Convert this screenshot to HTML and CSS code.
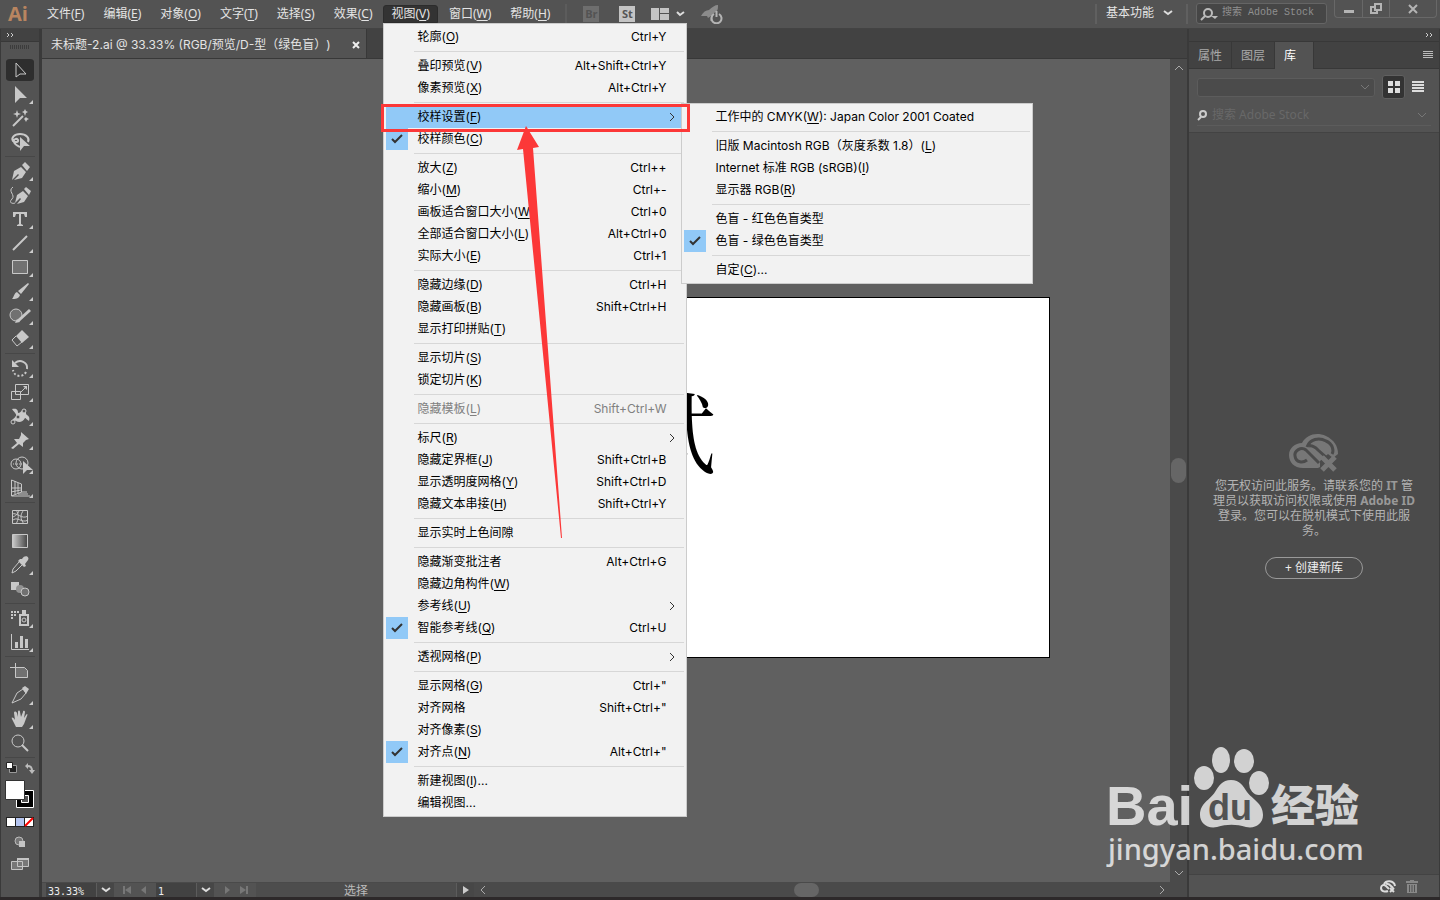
FILE: index.html
```html
<!DOCTYPE html>
<html lang="zh-CN">
<head>
    <meta charset="UTF-8">
    <meta name="viewport" content="width=device-width, initial-scale=1.0">
    <title>未标题-2.ai</title>
    <link rel="stylesheet" href="styles.css">
</head>
<body>
    <!-- Barra de menus -->
    <header class="menubar">
        <span class="logo">Ai</span>
        <nav class="menus">
            <button class="menu-btn">文件(<u>F</u>)</button>
            <button class="menu-btn">编辑(<u>E</u>)</button>
            <button class="menu-btn">对象(<u>O</u>)</button>
            <button class="menu-btn">文字(<u>T</u>)</button>
            <button class="menu-btn">选择(<u>S</u>)</button>
            <button class="menu-btn">效果(<u>C</u>)</button>
            <div class="menu-open">
                <button class="menu-btn active">视图(<u>V</u>)</button>

                <div class="menu view-menu">
                    <button class="item"><span>轮廓(<u>O</u>)</span><kbd>Ctrl+Y</kbd></button>
                    <hr>
                    <button class="item"><span>叠印预览(<u>V</u>)</span><kbd>Alt+Shift+Ctrl+Y</kbd></button>
                    <button class="item"><span>像素预览(<u>X</u>)</span><kbd>Alt+Ctrl+Y</kbd></button>
                    <hr>
                    <button class="item selected"><span>校样设置(<u>F</u>)</span><svg class="more" viewBox="0 0 6 10"><path d="M1 1l4 4-4 4"/></svg></button>
                    <button class="item checked"><svg class="check" viewBox="0 0 22 22"><path d="M6 11l3 3 7-7"/></svg><span>校样颜色(<u>C</u>)</span></button>
                    <hr>
                    <button class="item"><span>放大(<u>Z</u>)</span><kbd>Ctrl++</kbd></button>
                    <button class="item"><span>缩小(<u>M</u>)</span><kbd>Ctrl+-</kbd></button>
                    <button class="item"><span>画板适合窗口大小(<u>W</u>)</span><kbd>Ctrl+0</kbd></button>
                    <button class="item"><span>全部适合窗口大小(<u>L</u>)</span><kbd>Alt+Ctrl+0</kbd></button>
                    <button class="item"><span>实际大小(<u>E</u>)</span><kbd>Ctrl+1</kbd></button>
                    <hr>
                    <button class="item"><span>隐藏边缘(<u>D</u>)</span><kbd>Ctrl+H</kbd></button>
                    <button class="item"><span>隐藏画板(<u>B</u>)</span><kbd>Shift+Ctrl+H</kbd></button>
                    <button class="item"><span>显示打印拼贴(<u>T</u>)</span></button>
                    <hr>
                    <button class="item"><span>显示切片(<u>S</u>)</span></button>
                    <button class="item"><span>锁定切片(<u>K</u>)</span></button>
                    <hr>
                    <button class="item" disabled><span>隐藏模板(<u>L</u>)</span><kbd>Shift+Ctrl+W</kbd></button>
                    <hr>
                    <button class="item"><span>标尺(<u>R</u>)</span><svg class="more" viewBox="0 0 6 10"><path d="M1 1l4 4-4 4"/></svg></button>
                    <button class="item"><span>隐藏定界框(<u>J</u>)</span><kbd>Shift+Ctrl+B</kbd></button>
                    <button class="item"><span>显示透明度网格(<u>Y</u>)</span><kbd>Shift+Ctrl+D</kbd></button>
                    <button class="item"><span>隐藏文本串接(<u>H</u>)</span><kbd>Shift+Ctrl+Y</kbd></button>
                    <hr>
                    <button class="item"><span>显示实时上色间隙</span></button>
                    <hr>
                    <button class="item"><span>隐藏渐变批注者</span><kbd>Alt+Ctrl+G</kbd></button>
                    <button class="item"><span>隐藏边角构件(<u>W</u>)</span></button>
                    <button class="item"><span>参考线(<u>U</u>)</span><svg class="more" viewBox="0 0 6 10"><path d="M1 1l4 4-4 4"/></svg></button>
                    <button class="item checked"><svg class="check" viewBox="0 0 22 22"><path d="M6 11l3 3 7-7"/></svg><span>智能参考线(<u>Q</u>)</span><kbd>Ctrl+U</kbd></button>
                    <hr>
                    <button class="item"><span>透视网格(<u>P</u>)</span><svg class="more" viewBox="0 0 6 10"><path d="M1 1l4 4-4 4"/></svg></button>
                    <hr>
                    <button class="item"><span>显示网格(<u>G</u>)</span><kbd>Ctrl+"</kbd></button>
                    <button class="item"><span>对齐网格</span><kbd>Shift+Ctrl+"</kbd></button>
                    <button class="item"><span>对齐像素(<u>S</u>)</span></button>
                    <button class="item checked"><svg class="check" viewBox="0 0 22 22"><path d="M6 11l3 3 7-7"/></svg><span>对齐点(<u>N</u>)</span><kbd>Alt+Ctrl+"</kbd></button>
                    <hr>
                    <button class="item"><span>新建视图(<u>I</u>)...</span></button>
                    <button class="item"><span>编辑视图...</span></button>

                    <div class="menu submenu">
                        <button class="item"><span>工作中的 CMYK(<u>W</u>): Japan Color 2001 Coated</span></button>
                        <hr>
                        <button class="item"><span>旧版 Macintosh RGB（灰度系数 1.8）(<u>L</u>)</span></button>
                        <button class="item"><span>Internet 标准 RGB (sRGB)(<u>I</u>)</span></button>
                        <button class="item"><span>显示器 RGB(<u>R</u>)</span></button>
                        <hr>
                        <button class="item"><span>色盲 - 红色色盲类型</span></button>
                        <button class="item checked"><svg class="check" viewBox="0 0 22 22"><path d="M6 11l3 3 7-7"/></svg><span>色盲 - 绿色色盲类型</span></button>
                        <hr>
                        <button class="item"><span>自定(<u>C</u>)...</span></button>
                    </div>

                    <!-- Marcação em vermelho -->
                    <div class="mark"></div>
                    <svg class="arrow" viewBox="0 0 48 414"><path d="M10 1L1 25l6-1 38 389h1L17 23l6-1z"/></svg>
                </div>
            </div>
            <button class="menu-btn">窗口(<u>W</u>)</button>
            <button class="menu-btn">帮助(<u>H</u>)</button>
        </nav>
        <div class="apps">
            <button class="app off">Br</button>
            <button class="app">St</button>
            <button class="arrange" aria-label="排列文档">
                <svg width="34" height="12" viewBox="0 0 34 12"><path fill="#c4c4c4" d="M0 0h8v12H0zM9 0h9v5H9zM9 6h9v6H9z"/><path fill="none" stroke="#ddd" stroke-width="2" d="M26 4l3 3 4-3"/></svg>
            </button>
            <button aria-label="GPU">
                <svg width="23" height="20" viewBox="0 0 23 20"><path fill="#8b8b8b" d="M0 12C2 8 5 6 8 6c3-3 6-5 9-5 0 3 0 5-2 7-4 1-4 6-3 8l-3 1 1-5-3 2-1-2z"/><path fill="none" stroke="#b4b4b4" stroke-width="2" d="M13 10a5 5 0 1 0 5 0M15.500 7v6"/></svg>
            </button>
        </div>
        <div class="right">
            <button class="workspace">基本功能 <svg width="10" height="6" viewBox="0 0 10 6"><path fill="none" stroke="#ddd" stroke-width="2" d="M1 1l4 3 4-3"/></svg></button>
            <label class="stock">
                <svg width="18" height="14" viewBox="0 0 18 14"><g fill="none" stroke="#bbb" stroke-width="2"><circle cx="8" cy="5" r="4"/><path d="M5 8l-4 4"/></g><path fill="#bbb" d="M11 8h7l-3 3z"/></svg>
                <input type="text" placeholder="搜索 Adobe Stock">
            </label>
            <div class="window">
                <button aria-label="最小化"><svg width="12" height="12"><path fill="#b4b4b4" d="M1 7h10v3H1z"/></svg></button>
                <button aria-label="还原"><svg width="12" height="12"><path fill="none" stroke="#b4b4b4" stroke-width="2" d="M5 1h6v6H5zM4 4H1v6h6V8"/></svg></button>
                <button class="close" aria-label="关闭"><svg width="12" height="12"><path fill="none" stroke="#b4b4b4" stroke-width="2" d="M2 2l8 8M10 2l-8 8"/></svg></button>
            </div>
        </div>
    </header>

    <main class="workarea">
        <!-- Ferramentas -->
        <aside class="toolbar">
            <div class="dock"><svg width="8" height="6" viewBox="0 0 8 6"><path d="M1 1l2 2-2 2M5 1l2 2-2 2"/></svg></div>
            <div class="grip"></div>
            <div class="tools">
                <button class="active" aria-label="选择"><svg viewBox="2 0 28 24"><path class="l" d="M12 5v14l4-3h6z"/></svg></button>
                <button class="sub" aria-label="直接选择"><svg viewBox="2 0 28 24"><path d="M11 4v17l5-5h7z"/></svg></button>
                <button aria-label="魔棒"><svg viewBox="2 0 28 24"><path class="l" stroke-width="2" d="M9 20l10-10"/><path d="M13 4l1 3 3 1-3 1-1 3-1-3-3-1 3-1zM21 3l1 2 2 1-2 1-1 3-1-3-2-1 2-1zM22 11l1 1 2 1-2 1-1 2-1-2-1-1z"/></svg></button>
                <button aria-label="套索"><svg viewBox="2 0 28 24"><path class="l" stroke-width="2" d="M24 12c2-4-2-8-8-8s-9 4-7 7c2 2 6 1 5-1s-5-1-4 2 4 4 6 5"/><path d="M16 7v14l4-5h6z"/></svg></button>
                <hr>
                <button class="sub" aria-label="钢笔"><svg viewBox="2 0 28 24"><path d="M8 21l2-9 7-4 5 5-4 6-8 2 5-5-1-1zM18 6l3-3 5 5-3 4z"/></svg></button>
                <button aria-label="曲率"><svg viewBox="2 0 28 24"><path d="M11 20l2-8 6-4 5 5-4 6-7 2 4-5-1-1zM20 6l2-2 5 4-2 4z"/><path class="l" d="M9 4c-6 4 3 8-1 12s1 5 3 4"/></svg></button>
                <button class="sub" aria-label="文字"><svg viewBox="2 0 28 24"><path d="M9 5h14v5h-2l-1-3h-3v10l2 1v1h-6v-1l2-1V7h-3l-1 3H9z"/></svg></button>
                <button class="sub" aria-label="直线段"><svg viewBox="2 0 28 24"><path class="l" stroke-width="2" d="M9 19L23 5"/></svg></button>
                <button class="sub" aria-label="矩形"><svg viewBox="2 0 28 24"><path class="s" d="M8.500 5.500h15v13h-15z"/></svg></button>
                <button class="sub" aria-label="画笔"><svg viewBox="2 0 28 24"><path d="M24 4l1 1-8 10-3-3zM13 13l3 3c-1 4-5 4-8 4 2-2 2-6 5-7z"/></svg></button>
                <button class="sub" aria-label="Shaper"><svg viewBox="2 0 28 24"><circle class="s" cx="12" cy="12" r="6"/><path class="l" stroke-width="3" d="M14 18L26 7"/><path d="M13 16l3 3-5 1z"/></svg></button>
                <button class="sub" aria-label="橡皮擦"><svg viewBox="2 0 28 24"><path d="M18 3l7 7-7 6-6-7z"/><path class="l" d="M12 9l-4 4 5 6 5-4"/></svg></button>
                <hr>
                <button class="sub" aria-label="旋转"><svg viewBox="2 0 28 24"><path class="l" stroke-width="2" d="M11 7c5-4 13-1 12 6"/><path class="l" stroke-width="2" stroke-dasharray="2 2" d="M22 16c-3 6-12 5-13-2"/><path d="M8 4v7h7z"/></svg></button>
                <button class="sub" aria-label="缩放"><svg viewBox="2 0 28 24"><path class="l" d="M11.500 4.500h13v10h-13zM7.500 11.500h9v8h-9zM17 12l5-5"/><path d="M19 6h4v4z"/></svg></button>
                <button class="sub" aria-label="宽度"><svg viewBox="2 0 28 24"><path d="M8 5c5-1 6 1 6 4 3 0 4-4 7-4 2 2 0 5 2 6s3 3 2 6c-2-1-3-3-4-3-2 4-6 5-9 3-2-1-3 1-4 0 1-3 3-3 4-5s-3-5-4-7z"/><path class="l" d="M9 18l11-11"/><circle class="d" cx="9" cy="18" r="2"/><circle class="d" cx="14" cy="13" r="2"/><circle class="d" cx="20" cy="7" r="2"/></svg></button>
                <button class="sub" aria-label="操控变形"><svg viewBox="2 0 28 24"><path d="M17 4l8 7-3 1-3 3v4l-4-3-6 5-2-1 6-5-3-4h5l2-4z"/></svg></button>
                <button class="sub" aria-label="形状生成器"><svg viewBox="2 0 28 24"><circle class="l" cx="12" cy="12" r="5"/><circle class="l" cx="18" cy="11" r="6"/><path class="l" stroke-dasharray="1 1" d="M9 12h11"/><path d="M19 9v13l4-4h6z"/></svg></button>
                <button class="sub" aria-label="透视网格"><svg viewBox="2 0 28 24"><path class="l" d="M7.500 4v16l10-4V8zM11 5v13M14 7v10M7 12h10M7 16l10-2M17 16h6M14 18h10M8 20h18"/></svg></button>
                <hr>
                <button aria-label="网格"><svg viewBox="2 0 28 24"><path class="l" d="M8.500 5.500h15v13h-15zM12 5c3 4 3 9 0 14M20 5c-4 4-4 9 0 14M8 9c5-2 10 6 16 2M8 16c5-6 10 3 16-1M8 12c3 0 7-4 7-7"/></svg></button>
                <button aria-label="渐变"><svg viewBox="2 0 28 24"><defs><linearGradient id="fade"><stop stop-color="#ccc"/><stop offset="1" stop-color="#444"/></linearGradient></defs><path fill="url(#fade)" stroke="#c8c8c8" d="M8.500 5.500h15v13h-15z"/></svg></button>
                <button class="sub" aria-label="吸管"><svg viewBox="2 0 28 24"><path d="M18 6c3-5 8-2 6 1l-3 4 1 2-2 1-6-6 2-2z"/><path class="l" d="M15 9l-6 7-1 4 4-2 6-6"/></svg></button>
                <button aria-label="混合"><svg viewBox="2 0 28 24"><path d="M7 5h8v8H7z"/><circle cx="16" cy="12" r="4" fill="#929292"/><circle class="s" cx="21" cy="15" r="4"/></svg></button>
                <hr>
                <button class="sub" aria-label="符号喷枪"><svg viewBox="2 0 28 24"><path class="l" stroke-width="2" d="M16 9h8v10h-8z"/><circle class="l" cx="20" cy="14" r="2"/><path d="M18 4h4v4h-4zM7 5h2v2H7zM10 5h2v2h-2zM13 5h2v2h-2zM7 8h2v2H7zM10 8h2v2h-2zM7 11h2v2H7z"/></svg></button>
                <button class="sub" aria-label="柱形图"><svg viewBox="2 0 28 24"><path class="l" d="M7.500 4v15.500H25"/><path d="M11 12h3v6h-3zM16 6h3v12h-3zM21 9h3v9h-3z"/></svg></button>
                <hr>
                <button aria-label="画板"><svg viewBox="2 0 28 24"><path class="s" d="M11.500 8.500h9l3 3v7h-12z"/><path class="l" d="M6 8.500h6M11.500 4v5"/></svg></button>
                <button class="sub" aria-label="切片"><svg viewBox="2 0 28 24"><path class="l" d="M8 20l5-10 6-4 3 4-5 6z"/><path d="M18 5l3-2 4 3-3 5z"/></svg></button>
                <button class="sub" aria-label="抓手"><svg viewBox="2 0 28 24"><path d="M12 20l-4-8c-1-2 1-2 3 1L10 6c0-2 2-2 3 0l1 4V5c0-2 2-2 2 0l1 5 2-5c0-2 2-1 2 0l-1 6 2-3c1-2 2-1 1 1l-3 8-2 3z"/></svg></button>
                <button aria-label="缩放"><svg viewBox="2 0 28 24"><circle class="l" cx="14" cy="10" r="6"/><path class="l" stroke-width="2" d="M18 14l6 6"/></svg></button>
                <hr>
            </div>
            <div class="paint">
                <svg width="30" height="48" viewBox="0 0 30 48">
                    <path fill="#222" stroke="#999" d="M4.500 5.500h7v7h-7z"/><path fill="#fff" stroke="#222" d="M1.500 2.500h6v6h-6z"/>
                    <path fill="none" stroke="#bbb" stroke-width="2" d="M22 6c4 0 5 1 5 6"/><path fill="#bbb" d="M23 3v6l-3-3zM24 10h6l-3 4z"/>
                    <path fill="#000" stroke="#fff" d="M11.500 30.500h17v17h-17z"/><path fill="#535353" stroke="#fff" d="M16.500 35.500h7v7h-7z"/>
                    <path fill="#fff" stroke="#333" d="M.5 20.500h19v19H.5z"/>
                </svg>
                <svg width="28" height="10" viewBox="0 0 28 10"><path fill="#222" d="M0 0h28v10H0z"/><path fill="#fff" d="M1 1h8v8H1zM19 1h8v8h-8z"/><path fill="#b4c4f0" d="M10 1h8v8h-8z"/><path stroke="#f00" stroke-width="2" d="M19 9l8-8"/></svg>
                <svg width="12" height="12" viewBox="0 0 12 12"><circle cx="5" cy="5" r="4" fill="#777" stroke="#bbb"/><path fill="#c4c4c4" d="M5 5h6v6H5z"/></svg>
                <svg width="18" height="14" viewBox="0 0 18 14"><path fill="#777" stroke="#c4c4c4" d="M.5 4.500h11v8H.5zM6.500 1.500h11v8h-11z"/><path fill="#c4c4c4" d="M6 1h12v2H6z"/></svg>
            </div>
        </aside>

        <!-- Documento -->
        <section class="document">
            <div class="doc-tabs">
                <div class="doc-tab">未标题-2.ai @ 33.33% (RGB/预览/D-型（绿色盲）)<button aria-label="关闭"><svg width="8" height="8"><path stroke="#eee" stroke-width="2" d="M1 1l6 6M7 1L1 7"/></svg></button></div>
            </div>
            <div class="view">
                <div class="canvas">
                    <div class="artboard">试</div>
                </div>
                <div class="vscroll">
                    <svg width="10" height="6"><path d="M1 5l4-4 4 4"/></svg>
                    <i></i>
                    <svg width="10" height="6"><path d="M1 1l4 4 4-4"/></svg>
                </div>
            </div>
            <footer class="status">
                <input class="zoom" type="text" value="33.33%" aria-label="缩放">
                <button><svg width="10" height="6"><path fill="none" stroke="#ddd" stroke-width="2" d="M1 1l4 3 4-3"/></svg></button>
                <span class="nav"><svg width="28" height="10"><path fill="#777" d="M2 1h2v8H2zM10 1v8L4 5zM25 1v8l-5-4z"/></svg></span>
                <input class="page" type="text" value="1" aria-label="画板">
                <button><svg width="10" height="6"><path fill="none" stroke="#ddd" stroke-width="2" d="M1 1l4 3 4-3"/></svg></button>
                <span class="nav"><svg width="28" height="10"><path fill="#777" d="M4 1v8l5-4zM19 1v8l6-4zM25 1h2v8h-2z"/></svg></span>
                <span class="tool-name">选择</span>
                <button class="play"><svg width="8" height="10"><path fill="#ccc" d="M1 1v8l6-4z"/></svg></button>
                <div class="hscroll">
                    <svg width="6" height="10"><path d="M5 1L1 5l4 4"/></svg>
                    <i></i>
                    <svg width="6" height="10"><path d="M1 1l4 4-4 4"/></svg>
                </div>
            </footer>
        </section>

        <!-- Painel de bibliotecas -->
        <aside class="panel">
            <div class="dock end"><svg width="8" height="6" viewBox="0 0 8 6"><path d="M1 1l2 2-2 2M5 1l2 2-2 2"/></svg></div>
            <div class="tabs">
                <button>属性</button>
                <button>图层</button>
                <button class="active">库</button>
                <svg width="10" height="8"><path stroke="#bbb" d="M0 .5h10M0 2.500h10M0 4.500h10M0 6.500h10"/></svg>
            </div>
            <div class="filters">
                <div class="row">
                    <select aria-label="库"><option></option></select>
                    <button class="active" aria-label="网格视图"><svg width="12" height="12"><path fill="#ddd" d="M0 0h5v5H0zM7 0h5v5H7zM0 7h5v5H0zM7 7h5v5H7z"/></svg></button>
                    <button class="list" aria-label="列表视图"><svg width="12" height="12"><path fill="#ddd" d="M0 0h12v2H0zM0 3h12v2H0zM0 6h12v2H0zM0 9h12v2H0z"/></svg></button>
                </div>
                <label class="find">
                    <svg width="11" height="11"><g fill="none" stroke="#ccc" stroke-width="2"><circle cx="6" cy="4" r="3"/><path d="M4 7l-3 3"/></g></svg>
                    <input type="text" placeholder="搜索 Adobe Stock">
                    <svg width="10" height="6"><path fill="none" stroke="#777" d="M1 1l4 4 4-4"/></svg>
                </label>
            </div>
            <div class="empty">
                <svg width="50" height="38" viewBox="0 0 50 38"><path fill="#777" d="M13 9C18 0 28-2 37 2c8 4 12 10 12 18l-5 4-5-4-8 7v6l-2 1H14C5 34 0 28 0 21S6 9 13 9z"/><g fill="none" stroke="#4b4b4b" stroke-width="3"><path d="M30 29L17 16c-5-4-12 1-11 6 1 7 8 7 12 4M18 13c3-8 12-10 19-6 7 3 8 10 6 13M20 12c4-1 7 2 9 4l9 8"/></g><path stroke="#777" stroke-width="5" d="M33 23l13 13M46 23L33 36"/></svg>
                <p>您无权访问此服务。请联系您的 <b>IT</b> 管理员以获取访问权限或使用 <b>Adobe ID</b> 登录。您可以在脱机模式下使用此服务。</p>
                <button>+ 创建新库</button>
            </div>
            <div class="panel-foot">
                <svg width="16" height="13" viewBox="0 0 16 13"><path fill="none" stroke="#ddd" stroke-width="2" d="M9 9L6 6C4 4 1 5 1 8c0 4 5 4 7 3M4 4c2-4 10-4 11 2M6 4c3-1 5 2 7 4"/><path stroke="#ddd" stroke-width="2" d="M10 8l4 4M14 8l-4 4"/></svg>
                <svg width="12" height="13" viewBox="0 0 12 13"><path fill="#888" d="M4 0h4v1h4v2H0V1h4zM1 4h10v9H1z"/><path stroke="#535353" d="M3.500 5v7M6 5v7M8.500 5v7"/></svg>
            </div>
        </aside>
    </main>

    <div class="watermark">
        <svg width="264" height="124" viewBox="0 0 264 124">
            <text class="big" x="0" y="80">Bai</text>
            <ellipse cx="98" cy="33" rx="10" ry="12"/>
            <ellipse cx="115" cy="15" rx="9" ry="13"/>
            <ellipse cx="138" cy="16" rx="10" ry="12"/>
            <ellipse cx="153" cy="38" rx="10" ry="12"/>
            <path d="M125 35c9 0 12 6 16 12 5 7 16 11 16 23 0 9-8 14-17 12-10-3-19-3-29 0-10 2-17-4-17-12 0-12 10-15 15-23 4-6 7-12 16-12z"/>
            <text class="du" x="102" y="75">du</text>
            <text class="cn" x="165" y="77">经验</text>
            <text class="url" x="2" y="115">jingyan.baidu.com</text>
        </svg>
    </div>
</body>
</html>
```
FILE: styles.css
```css
* {
    box-sizing: border-box;
}

body {
    margin: 0;
    height: 100vh;
    display: flex;
    flex-direction: column;
    overflow: hidden;
    background: #535353;
    color: #e4e4e4;
    font-family: "Noto Sans", "Noto Sans CJK SC", sans-serif;
    font-size: 12px;
    line-height: 16px;
    text-spacing-trim: space-all;
    border-bottom: 3px solid #2d292a;
}

button, input, select {
    font: inherit;
    color: inherit;
    background: none;
    border: none;
    border-radius: 0;
    padding: 0;
    margin: 0;
    min-width: 0;
}

svg {
    display: block;
    flex: none;
}

u {
    text-underline-offset: 2px;
}

/* barra de menus */
.menubar {
    display: flex;
    align-items: center;
    height: 29px;
    flex: none;
    border-bottom: 1px solid #434343;
    background: #535353;
}

.logo {
    width: 39px;
    padding-left: 8px;
    color: #b98560;
    font: bold 20px/24px "Open Sans", sans-serif;
}

.menus {
    display: flex;
    align-items: flex-end;
    gap: 3px;
    height: 22px;
    align-self: flex-start;
    margin-top: 3px;
}

.menu-btn {
    height: 22px;
    padding: 0 8px;
    border-radius: 3px 3px 0 0;
}

.menu-btn.active {
    background: #333;
    height: 18px;
    line-height: 16px;
    padding: 0 7px;
    border: 1px solid #2c2c2c;
}

.menu-open {
    position: relative;
    height: 20px;
}

.menu {
    position: absolute;
    z-index: 10;
    padding: 2px;
    background: #f2f2f2;
    border: 1px solid #ccc;
    color: #000;
    font-family: "Inter", "Noto Sans CJK SC", sans-serif;
}

.view-menu {
    top: 18px;
    left: 0;
    width: 304px;
}

.submenu {
    top: 79px;
    left: 297px;
    width: 352px;
}

.item {
    position: relative;
    display: flex;
    justify-content: space-between;
    align-items: center;
    width: 100%;
    height: 22px;
    padding: 0 18px 0 31px;
    white-space: nowrap;
}

.item:disabled {
    color: #808080;
}

.item.selected {
    background: #91c9f7;
}

.item kbd {
    font: inherit;
}

.menu hr {
    height: 1px;
    margin: 3px 0 3px 28px;
    border: none;
    background: #d7d7d7;
}

.more {
    position: absolute;
    right: 9px;
    width: 6px;
    height: 10px;
}

.more path {
    fill: none;
    stroke: #333;
}

.check {
    position: absolute;
    left: 0;
    width: 22px;
    height: 22px;
    background: #91c9f7;
}

.check path {
    fill: none;
    stroke: #333;
    stroke-width: 2;
}

.mark {
    position: absolute;
    z-index: 11;
    top: 80px;
    left: -3px;
    width: 309px;
    height: 28px;
    border: 3px solid #fc3838;
}

.arrow {
    position: absolute;
    z-index: 12;
    top: 101px;
    left: 132px;
    width: 48px;
    height: 414px;
    fill: #fc3838;
}

.apps {
    display: flex;
    align-items: center;
    gap: 16px;
    margin-left: 7px;
    padding-left: 16px;
    border-left: 2px solid #5c5c5c;
    height: 20px;
}

.app {
    width: 16px;
    height: 16px;
    margin-right: 4px;
    background: #c4c4c4;
    color: #555;
    font: bold 11px/16px "Open Sans", sans-serif;
}

.app + .app {
    margin-right: 0;
}

.app.off {
    background: #6e6e6e;
    color: #535353;
}

.right {
    display: flex;
    align-items: center;
    height: 28px;
    margin-left: auto;
}

.workspace {
    display: flex;
    align-items: center;
    gap: 9px;
    height: 20px;
    width: 93px;
    padding: 0 0 2px 9px;
    border: solid #606060;
    border-width: 0 2px;
    white-space: nowrap;
}

.stock {
    display: flex;
    align-items: center;
    gap: 4px;
    width: 131px;
    height: 21px;
    margin: 0 7px 2px 8px;
    padding-left: 3px;
    background: #464646;
    border: 1px solid #656565;
    border-radius: 3px;
}

.stock svg {
    margin-top: 3px;
}

.stock input {
    width: 100px;
    font: 10px/14px "Liberation Mono", "Noto Sans CJK SC", monospace;
}

.stock input::placeholder {
    color: #909090;
}

.window {
    display: flex;
    align-self: flex-start;
    height: 18px;
    margin-right: 3px;
    border: 1px solid #686868;
    border-top: none;
    border-radius: 0 0 4px 4px;
}

.window button {
    display: flex;
    align-items: center;
    justify-content: center;
    width: 27px;
}

.window button + button {
    border-left: 1px solid #686868;
}

.window .close {
    width: 47px;
}

/* area de trabalho */
.workarea {
    display: flex;
    flex: 1;
    min-height: 0;
}

.toolbar {
    width: 42px;
    flex: none;
    border: solid #3a3a3a;
    border-width: 0 3px 0 1px;
}

.dock {
    display: flex;
    align-items: center;
    height: 13px;
    padding: 0 5px;
    background: #424242;
    border-bottom: 1px solid #383838;
}

.dock.end {
    justify-content: flex-end;
    padding-right: 6px;
}

.dock path {
    fill: none;
    stroke: #ccc;
}

.grip {
    height: 4px;
    margin: 3px 10px 9px 9px;
    background: repeating-linear-gradient(90deg, #3c3c3c 0 1px, #535353 1px 2px);
}

.tools {
    display: flex;
    flex-direction: column;
    align-items: center;
}

.tools button {
    position: relative;
    width: 28px;
    height: 24px;
    border-radius: 4px;
}

.tools button.active {
    background: #2e2e2e content-box;
    padding: 1px 0;
}

.tools svg {
    width: 28px;
    height: 24px;
    fill: #c8c8c8;
}

.tools .active svg {
    margin: -1px 0;
}

.tools .l {
    fill: none;
    stroke: #c8c8c8;
}

.tools .s {
    fill: #717171;
    stroke: #c8c8c8;
}

.tools .d {
    fill: #535353;
    stroke: #c8c8c8;
}

.tools .sub::after {
    content: "";
    position: absolute;
    right: 1px;
    bottom: 2px;
    border: 2px solid;
    border-color: transparent #ccc #ccc transparent;
}

.tools hr {
    width: 30px;
    height: 1px;
    margin: 2px 0;
    border: none;
    background: #474747;
}

.paint {
    display: flex;
    flex-direction: column;
    align-items: center;
    gap: 9px;
}

/* documento */
.document {
    display: flex;
    flex-direction: column;
    flex: 1;
    min-width: 0;
}

.doc-tabs {
    display: flex;
    height: 30px;
    background: #424242;
    border-bottom: 1px solid #383838;
}

.doc-tab {
    display: flex;
    align-items: center;
    justify-content: space-between;
    width: 325px;
    padding: 2px 6px 0 9px;
    background: #535353;
    border-right: 1px solid #383838;
    font-family: "Inter", "Noto Sans CJK SC", sans-serif;
    white-space: nowrap;
}

.view {
    display: flex;
    flex: 1;
    min-height: 0;
}

.canvas {
    position: relative;
    flex: 1;
    overflow: hidden;
    background: #606060;
}

.artboard {
    position: absolute;
    top: 238px;
    left: 368px;
    width: 640px;
    height: 361px;
    padding: 86px 0 0 217px;
    background: #fff;
    border: 1px solid #000;
    color: #000;
    font: 88px/88px "Noto Serif CJK SC", "Noto Sans CJK SC", serif;
}

.vscroll, .hscroll {
    display: flex;
    align-items: center;
    justify-content: space-between;
    background: #4a4a4a;
}

.vscroll {
    flex-direction: column;
    width: 17px;
    padding: 6px 0;
}

.vscroll path, .hscroll path {
    fill: none;
    stroke: #aaa;
}

.vscroll i, .hscroll i {
    width: 15px;
    height: 25px;
    border-radius: 8px;
    background: #666;
}

.status {
    display: flex;
    height: 15px;
    padding-left: 4px;
    background: #535353;
    border-top: 1px solid #4a4a4a;
}

.status input {
    background: #424242;
    color: #eee;
    font: 10px/14px "DejaVu Sans Mono", monospace;
    padding: 3px 0 0 2px;
}

.status .zoom {
    width: 50px;
}

.status .page {
    width: 40px;
}

.status button {
    display: flex;
    align-items: center;
    justify-content: center;
    width: 18px;
    background: #474747;
    border-left: 1px solid #5c5c5c;
}

.nav {
    display: flex;
    align-items: center;
    justify-content: center;
    width: 42px;
}

.tool-name {
    width: 200px;
    text-align: center;
    background: #4d4d4d;
    color: #bbb;
    line-height: 16px;
}

.hscroll {
    flex: 1;
    padding: 0 22px 0 6px;
}

.hscroll i {
    width: 25px;
    height: 14px;
    margin: 0 auto 0 45%;
}

/* painel */
.panel {
    display: flex;
    flex-direction: column;
    width: 253px;
    flex: none;
    border: solid #3a3a3a;
    border-width: 0 1px 0 2px;
}

.tabs {
    display: flex;
    align-items: center;
    height: 27px;
    background: #424242;
    border-bottom: 1px solid #383838;
}

.tabs button {
    width: 43px;
    height: 27px;
    padding-top: 2px;
    border-right: 1px solid #383838;
    color: #aaa;
}

.tabs button.active {
    width: 39px;
    padding-right: 8px;
    background: #535353;
    color: #fff;
}

.tabs svg {
    margin: 0 6px 0 auto;
}

.filters {
    height: 64px;
    padding: 6px 8px 0;
    border-bottom: 1px solid #434343;
}

.row {
    display: flex;
    align-items: center;
    gap: 7px;
}

.row select {
    flex: 1;
    height: 19px;
    appearance: none;
    border: 1px solid #5c5c5c;
    border-radius: 3px;
    background: #4b4b4b url("data:image/svg+xml,%3Csvg xmlns='http://www.w3.org/2000/svg' width='8' height='5'%3E%3Cpath d='M0 0l4 4 4-4' fill='none' stroke='%23777'/%3E%3C/svg%3E") no-repeat right 5px center;
}

.row button {
    display: flex;
    align-items: center;
    justify-content: center;
    height: 24px;
}

.row button.active {
    width: 23px;
    background: #333;
    border: 1px solid #606060;
    border-radius: 3px;
}

.row .list {
    width: 19px;
    justify-content: flex-start;
}

.find {
    display: flex;
    align-items: center;
    gap: 4px;
    height: 21px;
    margin-top: 6px;
    padding-right: 4px;
    border-bottom: 1px solid #5c5c5c;
}

.find input {
    flex: 1;
}

.find input::placeholder {
    color: #686868;
}

.empty {
    flex: 1;
    display: flex;
    flex-direction: column;
    align-items: center;
    justify-content: center;
    padding: 5px 23px 0;
    background: #4b4b4b;
    color: #b4b4b4;
    text-align: center;
}

.empty p {
    margin: 6px 0 19px;
    line-height: 15px;
}

.empty b {
    color: #999;
}

.empty button {
    width: 98px;
    height: 22px;
    border: 1px solid #999;
    border-radius: 11px;
    color: #eee;
}

.panel-foot {
    display: flex;
    align-items: center;
    justify-content: flex-end;
    gap: 10px;
    height: 23px;
    padding-right: 21px;
    border-top: 1px solid #434343;
}

/* marca d'agua */
.watermark {
    position: absolute;
    right: 70px;
    bottom: 31px;
    z-index: 20;
}

.watermark svg {
    fill: #fff;
    opacity: 0.75;
}

.big {
    font: bold 56px "Liberation Sans", sans-serif;
}

.du {
    font: bold 36px "Liberation Sans", sans-serif;
    fill: #555;
}

.cn {
    font: 900 44px "Noto Sans CJK SC", sans-serif;
}

.url {
    font: 500 29px "Noto Sans", sans-serif;
}
```
